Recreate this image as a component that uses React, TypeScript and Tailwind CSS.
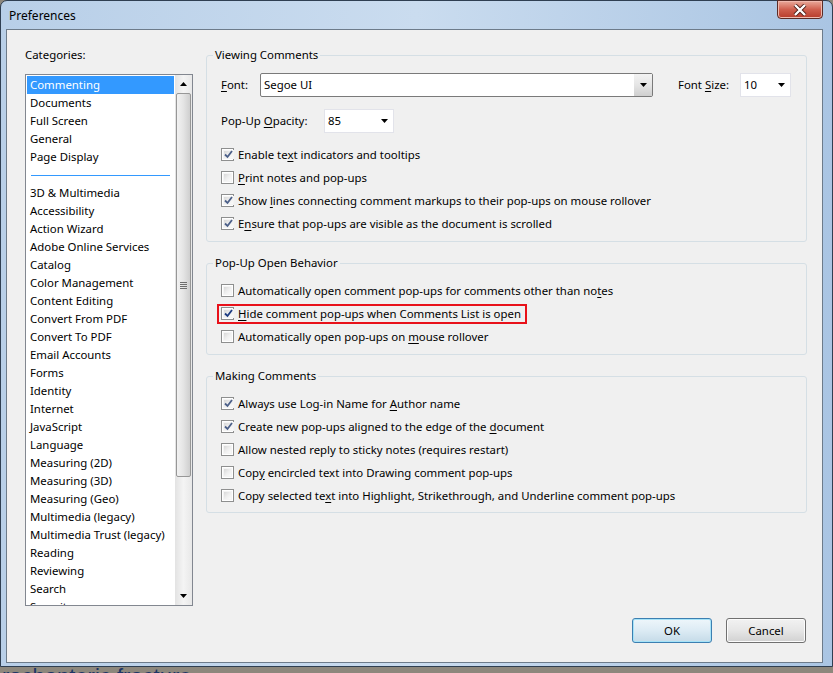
import React from "react";

const categories = [
  "Commenting",
  "Documents",
  "Full Screen",
  "General",
  "Page Display",
  "-",
  "3D & Multimedia",
  "Accessibility",
  "Action Wizard",
  "Adobe Online Services",
  "Catalog",
  "Color Management",
  "Content Editing",
  "Convert From PDF",
  "Convert To PDF",
  "Email Accounts",
  "Forms",
  "Identity",
  "Internet",
  "JavaScript",
  "Language",
  "Measuring (2D)",
  "Measuring (3D)",
  "Measuring (Geo)",
  "Multimedia (legacy)",
  "Multimedia Trust (legacy)",
  "Reading",
  "Reviewing",
  "Search",
  "Security",
];

// label split as [before, mnemonic, after]
type Opt = { parts: [string, string, string]; checked: boolean; focus?: boolean };

const viewing: Opt[] = [
  { parts: ["Enable te", "x", "t indicators and tooltips"], checked: true },
  { parts: ["", "P", "rint notes and pop-ups"], checked: false },
  { parts: ["Show ", "l", "ines connecting comment markups to their pop-ups on mouse rollover"], checked: true },
  { parts: ["E", "n", "sure that pop-ups are visible as the document is scrolled"], checked: true },
];

const openBehavior: Opt[] = [
  { parts: ["Automatically open comment pop-ups for comments other than no", "t", "es"], checked: false },
  { parts: ["", "H", "ide comment pop-ups when Comments List is open"], checked: true, focus: true },
  { parts: ["Automatically open pop-ups on ", "m", "ouse rollover"], checked: false },
];

const making: Opt[] = [
  { parts: ["Always use Log-in Name for ", "A", "uthor name"], checked: true },
  { parts: ["Create new pop-ups aligned to the edge of the ", "d", "ocument"], checked: true },
  { parts: ["Allow nested reply to sticky notes (requires restart)", "", ""], checked: false },
  { parts: ["Cop", "y", " encircled text into Drawing comment pop-ups"], checked: false },
  { parts: ["Copy selected te", "x", "t into Highlight, Strikethrough, and Underline comment pop-ups"], checked: false },
];

function Arrow({ up = false }: { up?: boolean }) {
  return (
    <svg width="7" height="4" viewBox="0 0 7 4" className={up ? "rotate-180" : ""}>
      <path d="M0 0h7L3.5 4z" fill="#000" />
    </svg>
  );
}

function Checkbox({ checked, dark }: { checked: boolean; dark?: boolean }) {
  return (
    <span className="w-[13px] h-[13px] shrink-0 border border-[#8e8f8f] bg-white p-[1px] flex">
      <span className="flex-1 bg-gradient-to-br from-[#d8d8d8] via-[#eeeeee] to-[#fbfbfb] border border-[#f4f4f4] flex items-center justify-center">
        {checked && (
          <svg width="9" height="9" viewBox="0 0 9 9">
            <path
              d="M1 4.5 L3.5 7 L8 1"
              fill="none"
              stroke={dark ? "#1d3c82" : "#4c6089"}
              strokeWidth="1.8"
            />
          </svg>
        )}
      </span>
    </span>
  );
}

function Label({ parts }: { parts: [string, string, string] }) {
  return (
    <span className="whitespace-nowrap">
      {parts[0]}
      {parts[1] && <span className="underline underline-offset-2">{parts[1]}</span>}
      {parts[2]}
    </span>
  );
}

function CheckRow({ o }: { o: Opt }) {
  return (
    <div className="h-[23px] flex items-center">
      {o.focus ? (
        <div className="-ml-[4px] h-[20px] flex items-center gap-[4px] border-2 border-[#e8111a] pl-[2px] pr-[4px]">
          <Checkbox checked={o.checked} dark />
          <Label parts={o.parts} />
        </div>
      ) : (
        <div className="flex items-center gap-[4px]">
          <Checkbox checked={o.checked} />
          <Label parts={o.parts} />
        </div>
      )}
    </div>
  );
}

function Group({
  title,
  children,
  className,
}: {
  title: string;
  children: React.ReactNode;
  className?: string;
}) {
  return (
    <fieldset className={"border border-[#d5dfe5] rounded-[3px] px-[6px] " + (className ?? "")}>
      <legend className="px-[2px] leading-[16px]">{title}</legend>
      <div className="pl-[8px]">{children}</div>
    </fieldset>
  );
}

function FlatCombo({ value, width }: { value: string; width: string }) {
  return (
    <div
      className={
        "h-[24px] bg-white border border-[#e2e3ea] flex items-center justify-between pl-[3px] pr-[5px] " +
        width
      }
    >
      <span>{value}</span>
      <Arrow />
    </div>
  );
}

function Button({ label, focused }: { label: string; focused?: boolean }) {
  return (
    <div
      className={
        "w-[80px] h-[25px] rounded-[3px] border flex items-center justify-center " +
        (focused
          ? "border-[#3c7fb1] bg-gradient-to-b from-[#eef6fb] via-[#dcebf4] to-[#c5dbe8] shadow-[inset_0_0_0_1px_#a6e3f8]"
          : "border-[#707070] bg-gradient-to-b from-[#f2f2f2] via-[#e6e6e6] to-[#d1d1d1] shadow-[inset_0_0_0_1px_#fcfcfc]")
      }
    >
      {label}
    </div>
  );
}

export default function App() {
  return (
    <div className="w-[833px] h-[673px] overflow-hidden bg-[#8d877c] font-['Noto_Sans',sans-serif] text-[11.4px] leading-[16px] text-black">
      {/* window */}
      <div className="h-[667px] w-[833px] pl-[5px] pr-[9px] rounded-t-[7px] border border-[#2f3f52] bg-gradient-to-r from-[#b8cfe8] via-[#cadcef] to-[#aac5e3] flex flex-col">
        {/* title bar */}
        <div className="h-[28px] flex items-start justify-between">
          <span className="pt-[7px] pl-[3px] text-[12px]">Preferences</span>
          <div className="w-[46px] h-[19px] -mt-[1px] rounded-b-[4px] border border-[#5b2c26] bg-gradient-to-b from-[#e9a99b] via-[#cf5f4e] to-[#b73b2a] flex items-center justify-center shadow-[inset_0_0_0_1px_#f0b9ae]">
            <svg width="14" height="12" viewBox="0 0 14 12">
              <path d="M2 1 L12 11 M12 1 L2 11" stroke="#4a1c16" strokeWidth="4" />
              <path d="M2 1 L12 11 M12 1 L2 11" stroke="#ffffff" strokeWidth="2.4" />
            </svg>
          </div>
        </div>

        {/* client */}
        <div className="h-[634px] border border-[#6d7b8a] bg-[#f0f0f0] flex flex-col">
          <div className="flex pt-[17px]">
            {/* categories */}
            <div className="ml-[18px] w-[168px]">
              <div className="h-[16px] leading-[16px] mb-[11px]">Categories:</div>
              <div className="h-[532px] border border-[#828790] bg-white flex">
                <div className="w-[149px] p-[1px] overflow-hidden">
                  {categories.map((c, i) =>
                    c === "-" ? (
                      <div key={i} className="h-[18px] flex items-center px-[4px]">
                        <div className="h-px w-full bg-[#3399ff]" />
                      </div>
                    ) : (
                      <div
                        key={i}
                        className={
                          "h-[18px] leading-[18px] pl-[3px] whitespace-nowrap " +
                          (i === 0 ? "bg-[#3399ff] text-white" : "")
                        }
                      >
                        {c}
                      </div>
                    )
                  )}
                </div>
                {/* scrollbar */}
                <div className="w-[17px] flex flex-col bg-gradient-to-r from-[#e3e3e3] via-[#f4f4f4] to-[#e8e8e8]">
                  <div className="h-[18px] flex items-center justify-center">
                    <Arrow up />
                  </div>
                  <div className="h-[384px] mx-[1px] rounded-[2px] border border-[#979797] bg-gradient-to-r from-[#f2f2f2] via-[#e4e4e4] to-[#cfcfcf] flex items-center justify-center">
                    <div className="flex flex-col gap-[1px]">
                      <div className="w-[7px] h-px bg-[#6d6d6d]" />
                      <div className="w-[7px] h-px bg-[#6d6d6d]" />
                      <div className="w-[7px] h-px bg-[#6d6d6d]" />
                      <div className="w-[7px] h-px bg-[#6d6d6d]" />
                    </div>
                  </div>
                  <div className="flex-1" />
                  <div className="h-[18px] flex items-center justify-center">
                    <Arrow />
                  </div>
                </div>
              </div>
            </div>

            {/* options */}
            <div className="ml-[13px] w-[601px] flex flex-col">
              <Group title="Viewing Comments" className="pb-[6px]">
                <div className="mt-[10px] h-[24px] flex items-center">
                  <span className="w-[39px]">
                    <span className="underline underline-offset-2">F</span>ont:
                  </span>
                  <div className="w-[393px] h-[24px] rounded-[2px] border border-[#7a7a7a] bg-white flex items-stretch">
                    <span className="flex-1 pl-[3px] leading-[22px]">Segoe UI</span>
                    <span className="w-[18px] bg-gradient-to-b from-[#f3f3f3] via-[#e5e5e5] to-[#cfcfcf] flex items-center justify-center">
                      <Arrow />
                    </span>
                  </div>
                  <span className="ml-[25px] w-[62px]">
                    Font <span className="underline underline-offset-2">S</span>ize:
                  </span>
                  <FlatCombo value="10" width="w-[51px]" />
                </div>
                <div className="mt-[12px] h-[24px] flex items-center">
                  <span className="w-[103px]">
                    Pop-Up <span className="underline underline-offset-2">O</span>pacity:
                  </span>
                  <FlatCombo value="85" width="w-[70px]" />
                </div>
                <div className="mt-[10px]">
                  {viewing.map((o, i) => (
                    <CheckRow key={i} o={o} />
                  ))}
                </div>
              </Group>

              <Group title="Pop-Up Open Behavior" className="mt-[13px] pb-[6px]">
                <div className="mt-[8px]">
                  {openBehavior.map((o, i) => (
                    <CheckRow key={i} o={o} />
                  ))}
                </div>
              </Group>

              <Group title="Making Comments" className="mt-[13px] pb-[5px]">
                <div className="mt-[8px]">
                  {making.map((o, i) => (
                    <CheckRow key={i} o={o} />
                  ))}
                </div>
              </Group>
            </div>
          </div>

          <div className="mt-auto mb-[19px] mr-[16px] flex justify-end gap-[14px]">
            <Button label="OK" focused />
            <Button label="Cancel" />
          </div>
        </div>
      </div>

      {/* desktop behind the dialog */}
      <div className="h-[6px] overflow-hidden pl-[2px]">
        <div className="-mt-[2px] text-[22px] leading-[24px] text-[#1d3566] font-['Liberation_Sans',sans-serif] whitespace-nowrap">
          rochanteric fracture
        </div>
      </div>
    </div>
  );
}
